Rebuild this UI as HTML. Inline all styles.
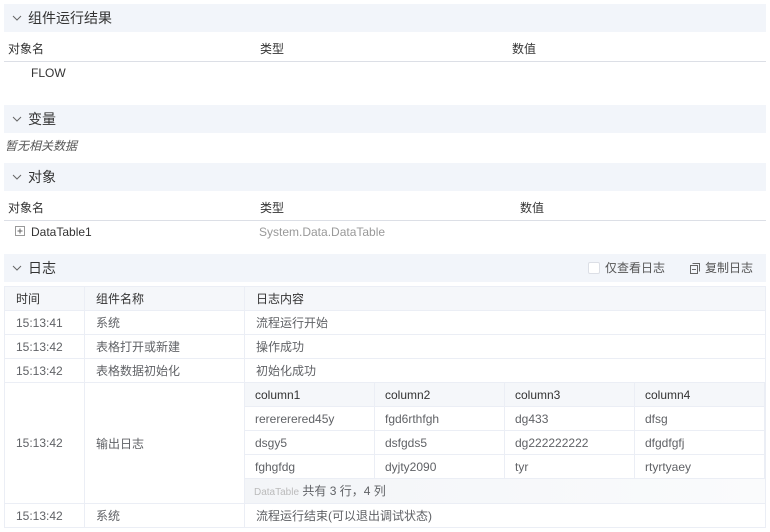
<!DOCTYPE html><html><head><meta charset="utf-8"><style>
*{box-sizing:border-box;margin:0;padding:0}
body{width:770px;height:532px;background:#fff;font-family:"Liberation Sans","Noto Sans CJK SC",sans-serif;font-size:12px;color:#333;position:relative;overflow:hidden}
.a{position:absolute}
.hd{position:absolute;left:4px;width:762px;height:28px;background:#f2f5fa;font-size:14px;line-height:28px;padding-left:24px;color:#333}
.hd svg{position:absolute;left:8px;top:10px}
.th{position:absolute;left:4px;width:762px;height:26px;border-bottom:1px solid #dcdfe6;line-height:26px}
.th span{position:absolute;top:0}
table{border-collapse:collapse;position:absolute}
td{border:1px solid #ebeef5;height:24px;padding:0 10px;color:#606266;white-space:nowrap}
.lg td{padding-left:11px}
tr.h td{background:#f5f7fa;color:#333}
</style></head><body>
<div class="hd" style="top:4px"><svg width="10" height="8" viewBox="0 0 10 8"><path d="M1 2l4 4 4-4" fill="none" stroke="#666" stroke-width="1"/></svg>组件运行结果</div>
<div class="th" style="top:36px"><span style="left:4px">对象名</span><span style="left:256px">类型</span><span style="left:508px">数值</span></div>
<div class="a" style="left:31px;top:65px;line-height:16px">FLOW</div>
<div class="hd" style="top:105px"><svg width="10" height="8" viewBox="0 0 10 8"><path d="M1 2l4 4 4-4" fill="none" stroke="#666" stroke-width="1"/></svg>变量</div>
<div class="a" style="left:5px;top:138px;line-height:16px;font-style:italic;color:#555">暂无相关数据</div>
<div class="hd" style="top:163px"><svg width="10" height="8" viewBox="0 0 10 8"><path d="M1 2l4 4 4-4" fill="none" stroke="#666" stroke-width="1"/></svg>对象</div>
<div class="th" style="top:195px"><span style="left:4px">对象名</span><span style="left:256px">类型</span><span style="left:516px">数值</span></div>
<svg class="a" style="left:15px;top:226px" width="10" height="10" viewBox="0 0 10 10"><rect x="0.5" y="0.5" width="9" height="9" fill="none" stroke="#999"/><path d="M2.5 5h5M5 2.5v5" stroke="#666"/></svg>
<div class="a" style="left:31px;top:224px;line-height:16px">DataTable1</div>
<div class="a" style="left:259px;top:224px;line-height:16px;color:#999">System.Data.DataTable</div>
<div class="hd" style="top:254px"><svg width="10" height="8" viewBox="0 0 10 8"><path d="M1 2l4 4 4-4" fill="none" stroke="#666" stroke-width="1"/></svg>日志
<span class="a" style="left:584px;top:8px;width:12px;height:12px;border:1px solid #dcdfe6;background:#fff;border-radius:2px"></span>
<span class="a" style="left:601px;font-size:12px;color:#555">仅查看日志</span>
<svg class="a" style="left:686px;top:9px" width="10" height="11" viewBox="0 0 10 11"><rect x="0.5" y="2.5" width="7" height="8" fill="none" stroke="#666"/><path d="M2.5 .5h7v8" fill="none" stroke="#666"/><path d="M2 6.5h4" stroke="#666"/></svg>
<span class="a" style="left:701px;font-size:12px;color:#555">复制日志</span></div>
<table class="lg" style="left:4px;top:286px;width:762px">
<colgroup><col style="width:80px"><col style="width:160px"><col></colgroup>
<tr class="h"><td>时间</td><td>组件名称</td><td>日志内容</td></tr>
<tr><td>15:13:41</td><td>系统</td><td>流程运行开始</td></tr>
<tr><td>15:13:42</td><td>表格打开或新建</td><td>操作成功</td></tr>
<tr><td>15:13:42</td><td>表格数据初始化</td><td>初始化成功</td></tr>
<tr><td style="height:121px">15:13:42</td><td>输出日志</td><td style="padding:0"></td></tr>
<tr><td>15:13:42</td><td>系统</td><td>流程运行结束(可以退出调试状态)</td></tr>
</table>
<table style="left:244px;top:382px;width:521px">
<colgroup><col style="width:130px"><col style="width:130px"><col style="width:130px"><col></colgroup>
<tr class="h"><td>column1</td><td>column2</td><td>column3</td><td>column4</td></tr>
<tr><td>rerererered45y</td><td>fgd6rthfgh</td><td>dg433</td><td>dfsg</td></tr>
<tr><td>dsgy5</td><td>dsfgds5</td><td>dg222222222</td><td>dfgdfgfj</td></tr>
<tr><td>fghgfdg</td><td>dyjty2090</td><td>tyr</td><td>rtyrtyaey</td></tr>
</table>
<div class="a" style="left:245px;top:479px;width:520px;height:24px;background:linear-gradient(90deg,#f3f5f8,#fafbfc);line-height:24px;padding-left:9px;color:#606266"><span style="font-size:10px;color:#bbb">DataTable</span> 共有 3 行，4 列</div>
</body></html>
